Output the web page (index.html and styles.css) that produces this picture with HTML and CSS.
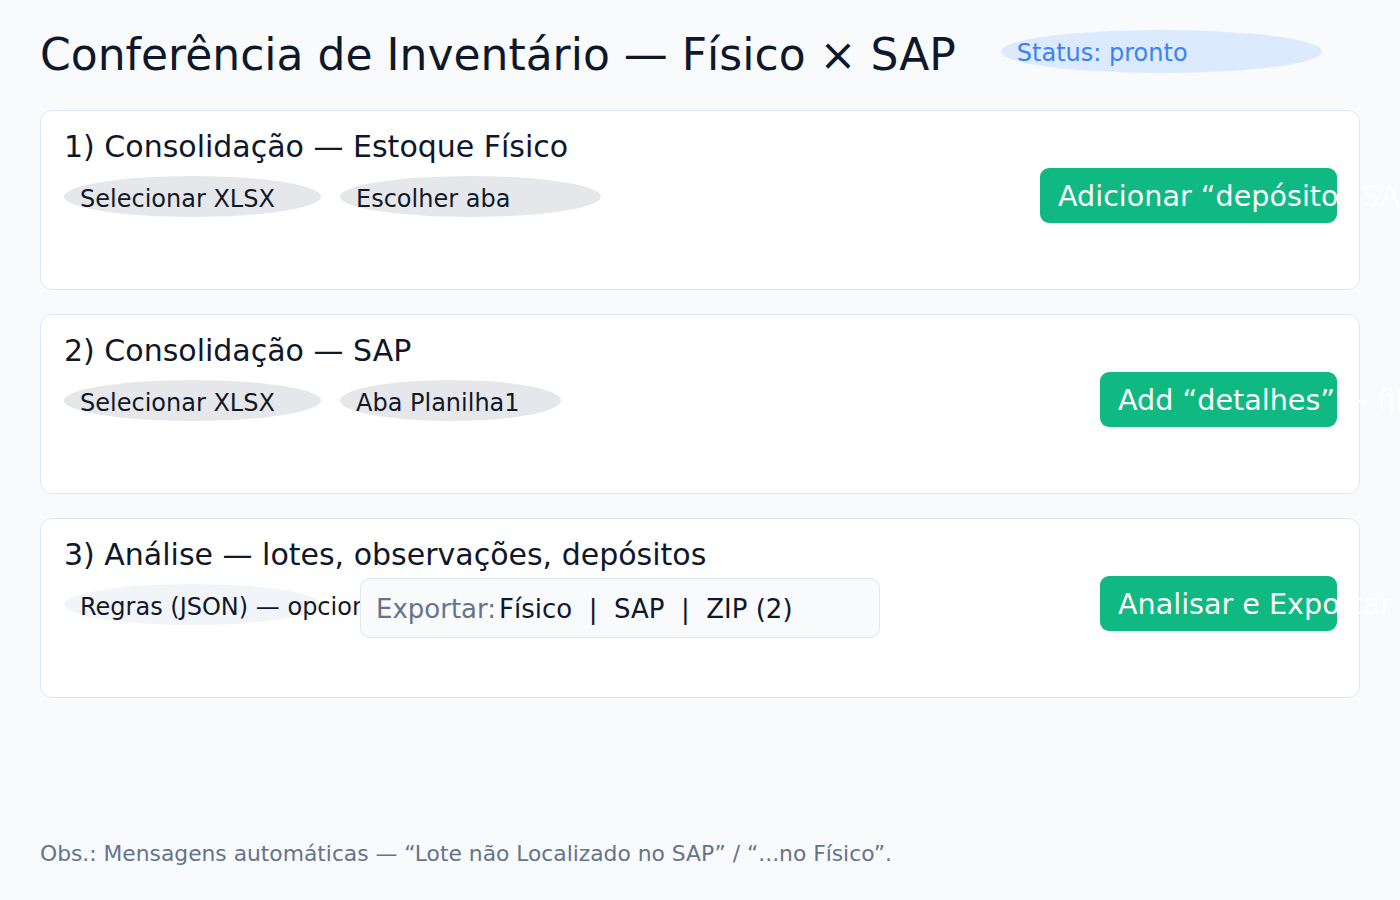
FILE: index.html
```html
<!DOCTYPE html>
<html lang="pt-BR">
<head>
<meta charset="utf-8">
<title>Conferência de Inventário</title>
<link rel="stylesheet" href="styles.css">
</head>
<body>
<div class="page">
  <header class="header">
    <h1 class="title">Conferência de Inventário — Físico × SAP</h1>
    <div class="status">Status: pronto</div>
  </header>

  <section class="card">
    <h2 class="card-title">1) Consolidação — Estoque Físico</h2>
    <div class="row">
      <div class="controls">
        <span class="pill pill-w257">Selecionar XLSX</span>
        <span class="pill pill-w261">Escolher aba</span>
      </div>
      <button class="btn btn-wide">Adicionar “depósito” SAP</button>
    </div>
  </section>

  <section class="card">
    <h2 class="card-title">2) Consolidação — SAP</h2>
    <div class="row">
      <div class="controls">
        <span class="pill pill-w257">Selecionar XLSX</span>
        <span class="pill pill-w221">Aba Planilha1</span>
      </div>
      <button class="btn">Add “detalhes” + filtro</button>
    </div>
  </section>

  <section class="card">
    <h2 class="card-title">3) Análise — lotes, observações, depósitos</h2>
    <div class="row">
      <div class="controls controls-wide">
        <span class="pill pill-w257 pill-light">Regras (JSON) — opcional</span>
        <div class="export"><span class="export-label">Exportar:</span><span class="export-links">Físico  |  SAP  |  ZIP (2)</span></div>
      </div>
      <button class="btn">Analisar e Exportar</button>
    </div>
  </section>

  <p class="note">Obs.: Mensagens automáticas — “Lote não Localizado no SAP” / “...no Físico”.</p>
</div>
</body>
</html>
```

FILE: styles.css
```css
* { box-sizing: border-box; }

html, body {
  margin: 0;
  padding: 0;
}

body {
  background: #f8fafc;
  font-family: "DejaVu Sans", "Liberation Sans", sans-serif;
  color: #0f172a;
}

.page {
  padding: 29px 40px 0 40px;
  width: 1400px;
  height: 900px;
  overflow: hidden;
}

.header {
  display: flex;
  align-items: flex-start;
  gap: 45px;
  height: 51px;
  margin-bottom: 30px;
}

.title {
  margin: 0;
  font-size: 44px;
  font-weight: normal;
  line-height: normal;
  color: #0f172a;
  white-space: nowrap;
}

.status {
  margin-top: 1px;
  width: 321px;
  height: 43px;
  border-radius: 50%;
  background: #dbeafe;
  color: #3b82f6;
  font-size: 24px;
  display: flex;
  align-items: center;
  padding: 2px 0 0 16px;
}

.card {
  height: 180px;
  background: #ffffff;
  border: 1px solid #e2e8f0;
  border-radius: 12px;
  padding: 19px 22px 20px 23px;
  margin-bottom: 24px;
}

.card-title {
  margin: 0 0 4px 0;
  font-size: 30px;
  font-weight: normal;
  line-height: 34px;
  color: #0f172a;
  white-space: nowrap;
}

.row {
  display: flex;
  justify-content: space-between;
  align-items: flex-start;
}

.controls {
  display: flex;
  align-items: flex-start;
  gap: 19px;
}

.pill {
  margin-top: 8px;
  height: 41px;
  border-radius: 50%;
  background: #e5e7eb;
  color: #111827;
  font-size: 24px;
  display: flex;
  align-items: center;
  padding: 4px 0 0 16px;
  white-space: nowrap;
  overflow: visible;
  flex: none;
}

.pill-light { background: #f1f5f9; }
.pill-w257 { width: 257px; }
.pill-w261 { width: 261px; }
.pill-w221 { width: 221px; }

.export {
  margin-top: 2px;
  margin-left: 20px;
  width: 520px;
  height: 60px;
  background: #f8fafc;
  border: 1px solid #e2e8f0;
  border-radius: 10px;
  display: flex;
  align-items: center;
  padding: 1px 0 0 15px;
  font-size: 26px;
  flex: none;
}

.export-label {
  color: #64748b;
  margin-right: 3px;
}

.export-links {
  color: #0f172a;
  white-space: pre;
}

.btn {
  width: 237px;
  height: 55px;
  border: none;
  border-radius: 9px;
  background: #10b981;
  color: #ffffff;
  font-family: "DejaVu Sans", "Liberation Sans", sans-serif;
  font-size: 28.6px;
  text-align: left;
  padding: 0 0 0 18px;
  white-space: nowrap;
  overflow: visible;
  flex: none;
  cursor: pointer;
}

.btn-wide { width: 297px; }

.note {
  margin: 143px 0 0 0;
  font-size: 21.8px;
  line-height: normal;
  color: #64748b;
  white-space: nowrap;
}
```
